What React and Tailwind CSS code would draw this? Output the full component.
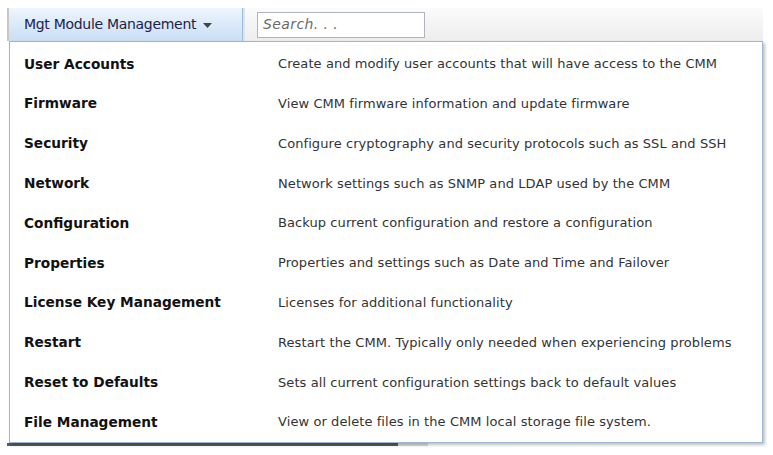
import React from 'react';

const items = [
  ['User Accounts', 'Create and modify user accounts that will have access to the CMM'],
  ['Firmware', 'View CMM firmware information and update firmware'],
  ['Security', 'Configure cryptography and security protocols such as SSL and SSH'],
  ['Network', 'Network settings such as SNMP and LDAP used by the CMM'],
  ['Configuration', 'Backup current configuration and restore a configuration'],
  ['Properties', 'Properties and settings such as Date and Time and Failover'],
  ['License Key Management', 'Licenses for additional functionality'],
  ['Restart', 'Restart the CMM. Typically only needed when experiencing problems'],
  ['Reset to Defaults', 'Sets all current configuration settings back to default values'],
  ['File Management', 'View or delete files in the CMM local storage file system.'],
];

export default function App() {
  return (
    <div className="w-[773px] h-[455px] bg-white overflow-hidden font-['DejaVu_Sans',sans-serif]">
      <div className="ml-[7px] pt-[8px] w-[756px] relative">
        {/* top bar */}
        <div className="flex items-center h-[33px] border-l-2 border-[#c8c8c8] bg-gradient-to-b from-[#fbfbfb] to-[#ededed]">
          <button className="h-full w-[234px] pl-[15px] text-left flex items-center bg-gradient-to-b from-[#eef5fd] to-[#c9def6] border-r border-[#9dbbe0] text-[14px] text-[#1c2348]">
            <span className="tracking-[-0.3px]">Mgt Module Management</span>
            <svg className="ml-[7px] mt-[2px]" width="9" height="5" viewBox="0 0 9 5">
              <path d="M0 0h9L4.5 5z" fill="#444" />
            </svg>
          </button>
          <div className="w-[2px] h-full bg-[#e2e2e2]" />
          <div className="ml-[12px] w-[168px] h-[26px] border border-[#b0b4bc] bg-white flex items-center pl-[5px]">
            <span className="italic text-[14px] text-[#6a6a6a] tracking-[0.4px]">Search. . .</span>
          </div>
        </div>

        {/* dropdown panel */}
        <div className="ml-[2px] w-[754px] h-[402px] border border-[#9db6d6] bg-white pt-[2px] shadow-[2px_2px_3px_rgba(0,0,0,0.25)] relative z-10">
          {items.map(([label, desc]) => (
            <div key={label} className="flex items-center h-[39.8px]">
              <div className="w-[268px] pl-[14px] font-bold text-[13.7px] text-[#111]">{label}</div>
              <div className="text-[13px] text-[#333] tracking-[0.08px]">{desc}</div>
            </div>
          ))}
        </div>
        <div className="flex">
          <div className="w-[391px] h-[3px] bg-[#5a5a5a]" />
          <div className="w-[30px] h-[3px] bg-[#dcdcdc]" />
        </div>
      </div>
    </div>
  );
}
